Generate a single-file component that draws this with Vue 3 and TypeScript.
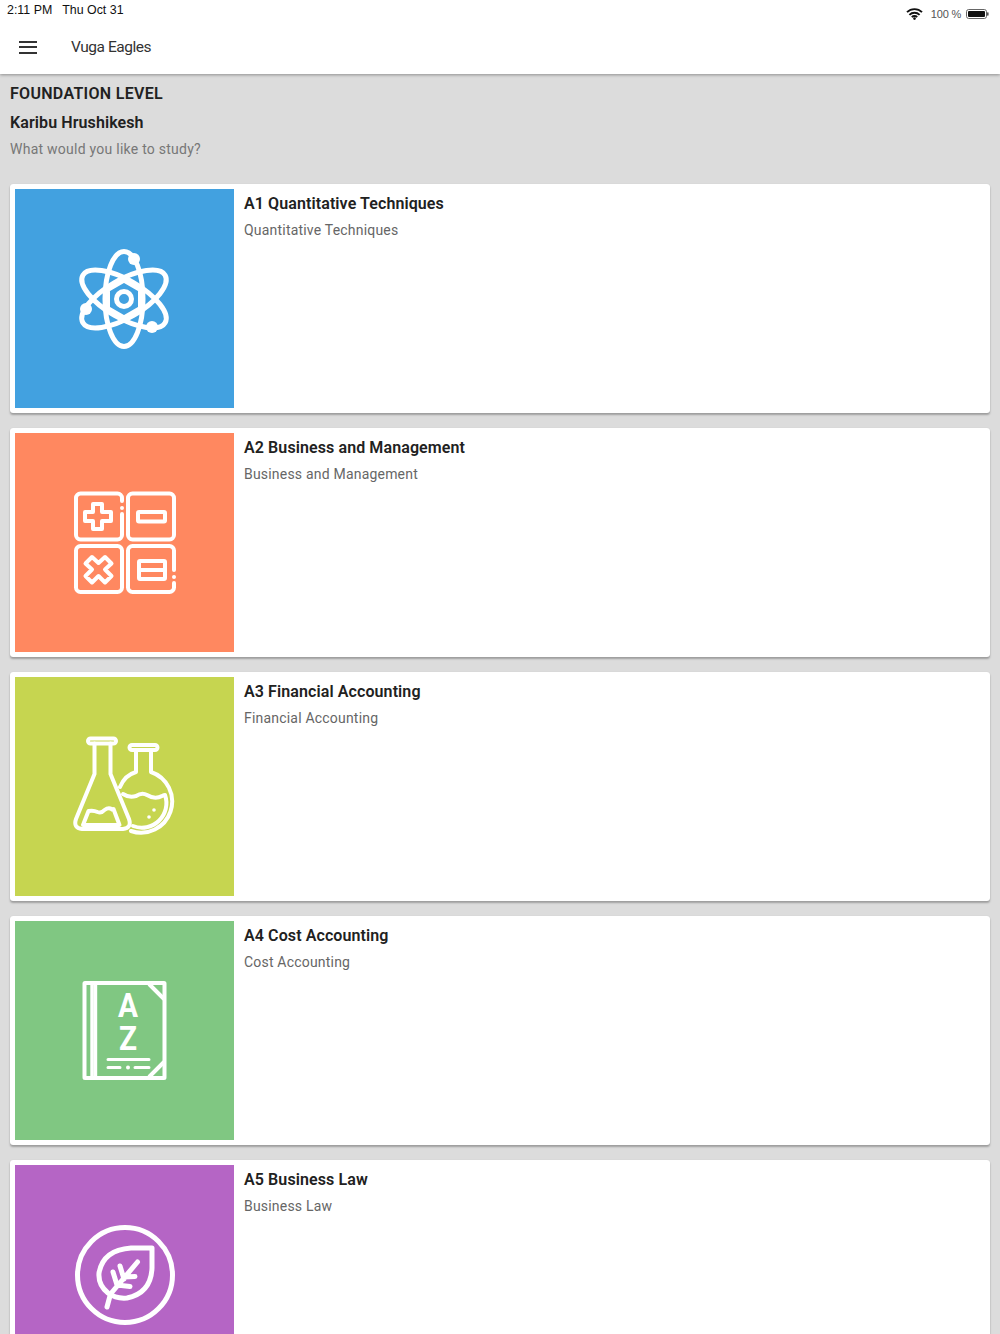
<script setup lang="ts">
interface Course {
  id: string
  title: string
  subtitle: string
  color: string
  viewBox: string
}

const courses: Course[] = [
  { id: 'atom', title: 'A1 Quantitative Techniques', subtitle: 'Quantitative Techniques', color: '#42a1e0', viewBox: '0 -1 120 120' },
  { id: 'calc', title: 'A2 Business and Management', subtitle: 'Business and Management', color: '#ff8860', viewBox: '0 0 120 120' },
  { id: 'flask', title: 'A3 Financial Accounting', subtitle: 'Financial Accounting', color: '#c6d550', viewBox: '0 0 120 120' },
  { id: 'book', title: 'A4 Cost Accounting', subtitle: 'Cost Accounting', color: '#80c782', viewBox: '0 0 120 120' },
  { id: 'leaf', title: 'A5 Business Law', subtitle: 'Business Law', color: '#b565c5', viewBox: '0 0 120 120' },
]
</script>

<template>
  <div class="page">
    <header class="appbar">
      <div class="status">
        <span class="clock">2:11 PM</span>
        <span class="date">Thu Oct 31</span>
        <span class="status-right">
          <svg class="wifi" width="17" height="12" viewBox="0 0 17 12">
            <path d="M1 4.2a10.6 10.6 0 0 1 15 0M3.4 6.8a7.2 7.2 0 0 1 10.200 0M5.800 9.200a3.800 3.800 0 0 1 5.400 0" fill="none" stroke="#111" stroke-width="1.900" />
            <circle cx="8.500" cy="10.600" r="1.300" fill="#111" />
          </svg>
          <span class="percent">100 %</span>
          <svg width="23" height="10" viewBox="0 0 23 10">
            <rect x="0.500" y="0.500" width="20" height="9" rx="2.200" fill="none" stroke="#666" />
            <rect x="2" y="2" width="17" height="6" rx="1" fill="#111" />
            <rect x="21" y="3.200" width="1.600" height="3.600" rx="0.700" fill="#555" />
          </svg>
        </span>
      </div>
      <div class="toolbar">
        <button class="menu" aria-label="Menu">
          <span></span><span></span><span></span>
        </button>
        <span class="app-title">Vuga Eagles</span>
      </div>
    </header>

    <section class="intro">
      <h1>FOUNDATION LEVEL</h1>
      <h2>Karibu Hrushikesh</h2>
      <p>What would you like to study?</p>
    </section>

    <main class="courses">
      <article v-for="course in courses" :key="course.id" class="card">
        <div class="thumb" :style="{ background: course.color }">
          <svg class="icon" width="120" height="120" :viewBox="course.viewBox" fill="none" stroke="#fff" stroke-width="4" stroke-linecap="round" stroke-linejoin="round">
            <template v-if="course.id === 'atom'">
              <ellipse cx="59" cy="59" rx="19" ry="47.500" stroke-width="5" />
              <ellipse cx="59" cy="59" rx="19" ry="47.500" stroke-width="5" transform="rotate(60 59 59)" />
              <ellipse cx="59" cy="59" rx="19" ry="47.500" stroke-width="5" transform="rotate(-60 59 59)" />
              <path d="M59 40l16.500 9.500v19L59 78l-16.500-9.500v-19z" stroke-width="5" />
              <circle cx="59" cy="59" r="7.500" stroke-width="5" />
              <g fill="#fff" stroke="none">
                <circle cx="69" cy="19" r="6" />
                <circle cx="87" cy="87" r="6" />
                <circle cx="21" cy="69" r="6" />
              </g>
            </template>

            <template v-else-if="course.id === 'calc'">
              <path d="M57 18v-3a4.500 4.500 0 0 0-4.500-4.500h-37A4.500 4.500 0 0 0 11 15v37a4.500 4.500 0 0 0 4.500 4.500h37A4.500 4.500 0 0 0 57 52V31" />
              <circle cx="57" cy="25" r="2" fill="#fff" stroke="none" />
              <rect x="63" y="10.500" width="46" height="46" rx="4.500" />
              <rect x="11" y="63" width="46" height="46" rx="4.500" />
              <path d="M109 87V67.500a4.500 4.500 0 0 0-4.500-4.500h-37a4.500 4.500 0 0 0-4.500 4.500v37a4.500 4.500 0 0 0 4.500 4.500h37a4.500 4.500 0 0 0 4.500-4.500V100" />
              <circle cx="109" cy="94" r="2" fill="#fff" stroke="none" />
              <path d="M28 21h9v8h9v9h-9v8h-9v-8h-8v-9h8z" />
              <rect x="73" y="29" width="27" height="9.500" rx="1" />
              <path d="M27 74l6.500 6 6.500-6 6.500 6.500-6.500 6 6.500 6.500-6.500 6.500-6.500-6.500-6.500 6.500-6.500-6.500 6.500-6.500-6.500-6z" />
              <rect x="74" y="78" width="26" height="18" rx="1" />
              <path d="M74 87h26" />
            </template>

            <template v-else-if="course.id === 'flask'">
              <rect x="23" y="11.500" width="28" height="5" rx="2.500" />
              <path d="M29.500 16.500V47L11 92q-3 9 6 10h41q9-1 6-10L45.500 47V16.500" />
              <path d="M18 98l5.500-14q5-1 9 1 4 1.500 7-2 4-3 7-1 1 1 2 0l6 16z" />
              <rect x="64.500" y="18" width="28" height="5" rx="2.500" />
              <path d="M71 23v22q-11 3-16 15" />
              <path d="M86 23v22a30.500 30.500 0 0 1-20 59" />
              <path d="M58 67q6 4 13 2 6-4 11-1 8 5 15 1 2-1 3-1a24.500 24.500 0 0 1-32 31" />
              <g fill="#fff" stroke="none">
                <circle cx="84" cy="90" r="1.800" />
                <circle cx="89" cy="83" r="1.800" />
              </g>
            </template>

            <template v-else-if="course.id === 'book'">
              <rect x="19.500" y="12" width="80" height="95" rx="0.500" stroke-linecap="butt" />
              <path d="M27 12v95M30.500 12v95" stroke-width="3.400" stroke-linecap="butt" />
              <path d="M84 13l15 15M84 106l15-15" stroke-linecap="butt" />
              <text class="letter" x="53" y="46" stroke="none" fill="#fff" textLength="20" lengthAdjust="spacingAndGlyphs">A</text>
              <text class="letter" x="54" y="78.500" stroke="none" fill="#fff" textLength="18" lengthAdjust="spacingAndGlyphs">Z</text>
              <path d="M43 88.500h41M43 96.500h12M70 96.500h14" stroke-width="3" />
              <circle cx="63" cy="96.500" r="2" fill="#fff" stroke="none" />
            </template>

            <template v-else>
              <circle cx="60" cy="60" r="47.500" stroke-width="5" />
              <path d="M87 33H66Q38 35 34 58q-1 12 9 20 8 6 19 5 24-5 25-30z" stroke-width="5" />
              <path d="M42 92l3.500-13 27-32M48 57l4 13M55 51l4 13M52 70l13 1.500M59 62l11-.5" stroke-width="5" />
            </template>
          </svg>
        </div>
        <div class="info">
          <h3>{{ course.title }}</h3>
          <p>{{ course.subtitle }}</p>
        </div>
      </article>
    </main>
  </div>
</template>

<style scoped>
.page {
  height: 1334px;
  overflow: hidden;
  background: #dcdcdc;
  font-family: Roboto, "Liberation Sans", sans-serif;
  color: #212121;
}

.appbar {
  position: relative;
  z-index: 1;
  height: 74px;
  background: #fff;
  box-shadow: 0 1px 3px rgba(0, 0, 0, 0.35);
}

.status {
  display: flex;
  align-items: center;
  height: 20px;
  padding: 0 11px 0 7px;
  font-family: "Liberation Sans", sans-serif;
  font-size: 12.400px;
  color: #111;
}

.date {
  margin-left: 10px;
}

.status-right {
  display: flex;
  align-items: center;
  gap: 5px;
  margin-left: auto;
  padding-top: 8px;
}

.wifi {
  margin-right: 3px;
}

.percent {
  font-size: 11px;
  letter-spacing: -0.2px;
  color: #555;
}

.toolbar {
  display: flex;
  align-items: center;
  height: 54px;
}

.menu {
  display: flex;
  flex-direction: column;
  gap: 3.500px;
  width: 18px;
  margin-left: 19px;
  padding: 0;
  border: none;
  background: none;
}

.menu span {
  height: 2px;
  background: #333;
}

.app-title {
  margin-left: 34px;
  font-size: 15.500px;
  letter-spacing: -0.45px;
  color: #333;
}

.intro {
  height: 110px;
  padding: 10px 10px 0;
  box-sizing: border-box;
}

.intro h1,
.intro h2 {
  margin: 0;
  font-size: 16px;
  font-weight: 600;
  line-height: 19px;
  letter-spacing: 0.3px;
}

.intro h2 {
  margin-top: 10px;
  letter-spacing: 0.1px;
}

.intro p {
  margin: 8px 0 0;
  font-size: 14px;
  line-height: 18px;
  letter-spacing: 0.25px;
  color: #777;
}

.courses {
  display: flex;
  flex-direction: column;
  gap: 15px;
  padding: 0 10px;
}

.card {
  display: flex;
  flex-shrink: 0;
  height: 229px;
  padding: 5px;
  box-sizing: border-box;
  border-radius: 3px;
  background: #fff;
  box-shadow: 0 2px 2px rgba(0, 0, 0, 0.28), 0 0 1px rgba(0, 0, 0, 0.15);
}

.thumb {
  display: flex;
  flex-shrink: 0;
  align-items: center;
  justify-content: center;
  width: 219px;
  height: 219px;
}

.info {
  padding: 5px 10px;
}

.info h3 {
  margin: 0;
  font-size: 16px;
  font-weight: 600;
  line-height: 20px;
  letter-spacing: 0.1px;
  color: #212121;
}

.info p {
  margin: 7px 0 0;
  font-size: 14px;
  line-height: 18px;
  letter-spacing: 0.2px;
  color: #666;
}

.letter {
  font-family: Roboto, "Liberation Sans", sans-serif;
  font-size: 33px;
  font-weight: 700;
}
</style>

<style>
html,
body {
  overflow: hidden;
}
</style>
